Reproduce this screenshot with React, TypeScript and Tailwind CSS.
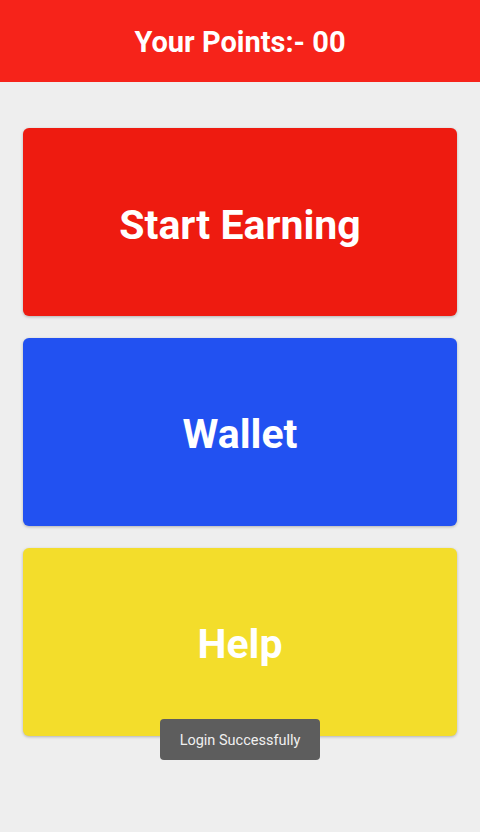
import React from "react";

export default function App() {
  return (
    <div className="relative w-[480px] h-[832px] bg-[#eeeeee] overflow-hidden" style={{ fontFamily: "Roboto, 'Liberation Sans', sans-serif" }}>
      <div className="h-[82px] bg-[#f6231a] flex items-center justify-center pt-[3px]">
        <span className="text-white font-bold text-[29px]">Your Points:- 00</span>
      </div>
      <div className="flex flex-col gap-[22px] px-[23px] pt-[46px]">
        <div className="h-[188px] rounded-[6px] bg-[#ee1b10] shadow-[0_1px_3px_rgba(0,0,0,0.25)] flex items-center justify-center pt-[7px]">
          <span className="text-white font-bold text-[41px]">Start Earning</span>
        </div>
        <div className="h-[188px] rounded-[6px] bg-[#2251f1] shadow-[0_1px_3px_rgba(0,0,0,0.25)] flex items-center justify-center pt-[6px]">
          <span className="text-white font-bold text-[41px]">Wallet</span>
        </div>
        <div className="h-[188px] rounded-[6px] bg-[#f3dd2b] shadow-[0_1px_3px_rgba(0,0,0,0.25)] flex items-center justify-center pt-[6px]">
          <span className="text-white font-bold text-[41px]">Help</span>
        </div>
      </div>
      <div className="absolute left-[160px] top-[719px] w-[160px] h-[41px] rounded-[4px] bg-[#5d5d5d] flex items-center justify-center pt-[2px]">
        <span className="text-[#f0f0f0] text-[14.5px]">Login Successfully</span>
      </div>
    </div>
  );
}
